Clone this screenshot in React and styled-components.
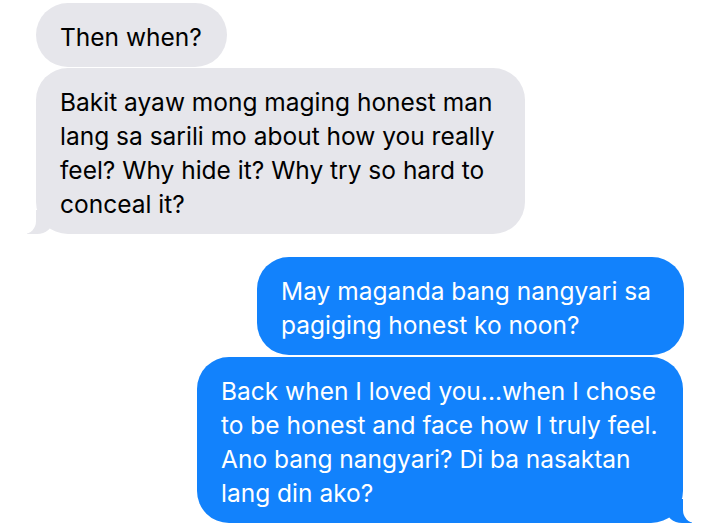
import React from 'react';
import styled, { createGlobalStyle, css } from 'styled-components';

const GlobalStyle = createGlobalStyle`
  html, body {
    margin: 0;
    padding: 0;
    background: #ffffff;
  }
  body {
    font-family: Inter, "Noto Sans", "Liberation Sans", sans-serif;
    -webkit-font-smoothing: antialiased;
  }
`;

const GREY = '#e6e6eb';
const BLUE = '#1282fc';

const Thread = styled.div`
  display: flex;
  flex-direction: column;
  padding: 3px 35px 0 36px;
  width: 719px;
  height: 531px;
  box-sizing: border-box;
  overflow: hidden;
`;

const Bubble = styled.div`
  position: relative;
  box-sizing: border-box;
  width: ${(p) => p.$w}px;
  margin-top: ${(p) => p.$gap}px;
  padding: 17px 0 13px 24px;
  border-radius: 32px;
  font-size: 24.5px;
  font-weight: 400;
  line-height: 34px;
  letter-spacing: 0;
  align-self: ${(p) => (p.$me ? 'flex-end' : 'flex-start')};
  margin-right: ${(p) => p.$mr || 0}px;
  background: ${(p) => (p.$me ? BLUE : GREY)};
  color: ${(p) => (p.$me ? '#ffffff' : '#000000')};

  ${(p) =>
    p.$tail &&
    !p.$me &&
    css`
      &::before {
        content: '';
        position: absolute;
        bottom: 0;
        left: -9px;
        width: 26px;
        height: 24px;
        background: ${GREY};
        border-bottom-right-radius: 16px 14px;
      }
      &::after {
        content: '';
        position: absolute;
        bottom: 0;
        left: -30px;
        width: 30px;
        height: 24px;
        background: #ffffff;
        border-bottom-right-radius: 12px 13px;
      }
    `}

  ${(p) =>
    p.$tail &&
    p.$me &&
    css`
      &::before {
        content: '';
        position: absolute;
        bottom: 0;
        right: -9px;
        width: 26px;
        height: 24px;
        background: ${BLUE};
        border-bottom-left-radius: 16px 14px;
      }
      &::after {
        content: '';
        position: absolute;
        bottom: 0;
        right: -30px;
        width: 30px;
        height: 24px;
        background: #ffffff;
        border-bottom-left-radius: 12px 13px;
      }
    `}
`;

const Line = styled.span`
  display: block;
  white-space: nowrap;
  position: relative;
  z-index: 1;
`;

const messages = [
  { me: false, w: 191, gap: 0, lines: ['Then when?'] },
  {
    me: false,
    w: 489,
    gap: 1,
    tail: true,
    lines: [
      'Bakit ayaw mong maging honest man',
      'lang sa sarili mo about how you really',
      'feel? Why hide it? Why try so hard to',
      'conceal it?',
    ],
  },
  {
    me: true,
    w: 427,
    gap: 23,
    lines: ['May maganda bang nangyari sa', 'pagiging honest ko noon?'],
  },
  {
    me: true,
    w: 486,
    gap: 2,
    mr: 1,
    tail: true,
    lines: [
      'Back when I loved you...when I chose',
      'to be honest and face how I truly feel.',
      'Ano bang nangyari? Di ba nasaktan',
      'lang din ako?',
    ],
  },
];

const App = () => (
  <>
    <GlobalStyle />
    <Thread>
      {messages.map((m, i) => (
        <Bubble key={i} $me={m.me} $w={m.w} $gap={m.gap} $mr={m.mr} $tail={m.tail}>
          {m.lines.map((l, j) => (
            <Line key={j}>{l}</Line>
          ))}
        </Bubble>
      ))}
    </Thread>
  </>
);

export default App;
